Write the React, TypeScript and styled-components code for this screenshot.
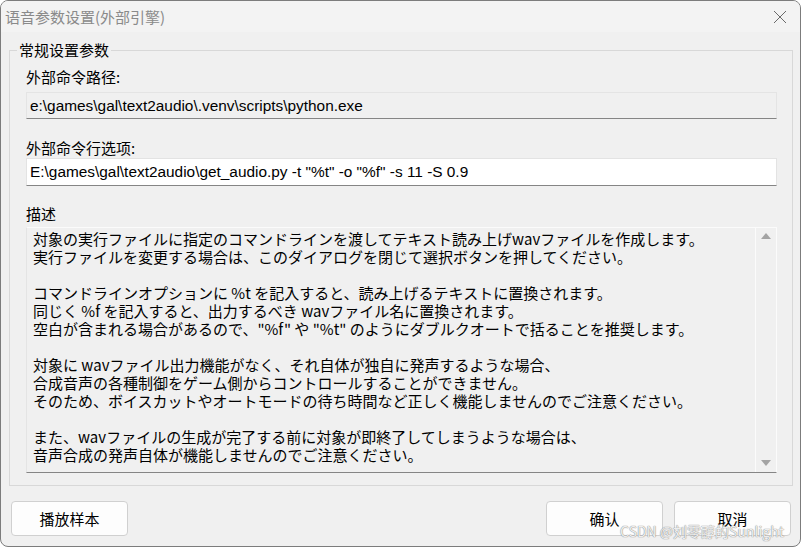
import React from 'react';
import styled, { createGlobalStyle } from 'styled-components';

const Global = createGlobalStyle`
  html, body { margin: 0; padding: 0; background: #ffffff; }
  body { font-family: "Noto Sans CJK SC", sans-serif; }
  * { box-sizing: border-box; }
`;

const Window = styled.div`
  position: relative;
  width: 801px;
  height: 547px;
  border: 1px solid #7c7c7c;
  border-radius: 8px;
  background: #f0f0f0;
  overflow: hidden;
  display: flex;
  flex-direction: column;
`;

const TitleBar = styled.div`
  height: 31px;
  flex: none;
  background: #f3f3f3;
  display: flex;
  align-items: center;
  justify-content: space-between;
  padding: 0 13px 0 4px;
`;

const Title = styled.div`
  font-family: "Noto Sans CJK SC", sans-serif;
  font-size: 15px;
  line-height: 20px;
  color: #8a8a8a;
`;

const CloseButton = styled.div`
  width: 14px;
  height: 14px;
  display: flex;
  align-items: center;
  justify-content: center;
`;

const Group = styled.fieldset`
  margin: 8px 7px 0 8px;
  padding: 0;
  border: 1px solid #d8d8d8;
  min-width: 0;
  flex: none;
`;

const Legend = styled.legend`
  margin-left: 7px;
  padding: 0 2px;
  font-size: 15px;
  line-height: 20px;
  color: #000;
`;

const GroupBody = styled.div`
  padding: 7px 15px 12px 16px;
  display: flex;
  flex-direction: column;
`;

const Label = styled.div<{ $top: number; $bottom: number }>`
  height: 20px;
  line-height: 20px;
  font-size: 15px;
  color: #000;
  margin-top: ${(p) => p.$top}px;
  margin-bottom: ${(p) => p.$bottom}px;
  font-family: "Noto Sans CJK SC", sans-serif;
`;

const Field = styled.input<{ $editable?: boolean; $h: number }>`
  display: block;
  width: 100%;
  height: ${(p) => p.$h}px;
  margin: 0;
  padding: 0 3px;
  border: 1px solid ${(p) => (p.$editable ? '#e3e3e3' : '#e4e4e4')};
  border-bottom-color: #858585;
  background: ${(p) => (p.$editable ? '#ffffff' : '#f0f0f0')};
  font-family: "Liberation Sans", Arial, sans-serif;
  font-size: 15.4px;
  color: #000;
  outline: none;
`;

const DescBox = styled.div`
  height: 246px;
  border: 1px solid #fbfbfb;
  border-bottom-color: #858585;
  border-left-color: #e4e4e4;
  background: #f0f0f0;
  display: flex;
`;

const DescText = styled.div`
  flex: 1;
  padding: 2px 6px;
  font-family: "Noto Sans CJK JP", sans-serif;
  font-size: 15px;
  line-height: 18px;
  white-space: pre;
  color: #000;
  overflow: hidden;
`;

const ScrollBar = styled.div`
  width: 21px;
  flex: none;
  border-left: 1px solid #fbfbfb;
  display: flex;
  flex-direction: column;
  justify-content: space-between;
  align-items: center;
  padding: 5px 0 6px;
`;

const ButtonRow = styled.div`
  flex: none;
  display: flex;
  align-items: center;
  padding: 15px 9px 0 10px;
  gap: 11px;
`;

const Spacer = styled.div`
  flex: 1;
`;

const Button = styled.button`
  width: 117px;
  height: 35px;
  margin: 0;
  padding: 0;
  border: 1px solid #d0d0d0;
  border-radius: 4px;
  background: #fdfdfd;
  font-family: "Noto Sans CJK SC", sans-serif;
  font-size: 15px;
  color: #000;
`;

const Watermark = styled.div`
  position: absolute;
  right: 16px;
  bottom: 6px;
  font-family: "Noto Sans CJK SC", sans-serif;
  font-size: 14px;
  line-height: 17px;
  color: rgba(252, 252, 252, 0.9);
  text-shadow: 0 0 1px #8a8a8a, 0 0 1px #8a8a8a;
  pointer-events: none;
`;

const lines = [
  '対象の実行ファイルに指定のコマンドラインを渡してテキスト読み上げwavファイルを作成します。',
  '実行ファイルを変更する場合は、このダイアログを閉じて選択ボタンを押してください。',
  '',
  'コマンドラインオプションに %t を記入すると、読み上げるテキストに置換されます。',
  '同じく %f を記入すると、出力するべき wavファイル名に置換されます。',
  '空白が含まれる場合があるので、"%f" や "%t" のようにダブルクオートで括ることを推奨します。',
  '',
  '対象に wavファイル出力機能がなく、それ自体が独自に発声するような場合、',
  '合成音声の各種制御をゲーム側からコントロールすることができません。',
  'そのため、ボイスカットやオートモードの待ち時間など正しく機能しませんのでご注意ください。',
  '',
  'また、wavファイルの生成が完了する前に対象が即終了してしまうような場合は、',
  '音声合成の発声自体が機能しませんのでご注意ください。',
];

export default function App() {
  return (
    <>
      <Global />
      <Window>
        <TitleBar>
          <Title>语音参数设置(外部引擎)</Title>
          <CloseButton>
            <svg width="14" height="14" viewBox="0 0 14 14">
              <path d="M1 1 L13 13 M13 1 L1 13" stroke="#6a6a6a" strokeWidth="1" fill="none" />
            </svg>
          </CloseButton>
        </TitleBar>
        <Group>
          <Legend>常规设置参数</Legend>
          <GroupBody>
            <Label $top={0} $bottom={5}>外部命令路径:</Label>
            <Field $h={27} readOnly value={'e:\\games\\gal\\text2audio\\.venv\\scripts\\python.exe'} />
            <Label $top={19} $bottom={0}>外部命令行选项:</Label>
            <Field
              $editable
              $h={28}
              readOnly
              value={'E:\\games\\gal\\text2audio\\get_audio.py -t "%t" -o "%f" -s 11 -S 0.9'}
            />
            <Label $top={18} $bottom={3}>描述</Label>
            <DescBox>
              <DescText>{lines.join('\n')}</DescText>
              <ScrollBar>
                <svg width="10" height="6" viewBox="0 0 10 6">
                  <path d="M5 0 L10 6 L0 6 Z" fill="#a3a3a3" />
                </svg>
                <svg width="10" height="6" viewBox="0 0 10 6">
                  <path d="M0 0 L10 0 L5 6 Z" fill="#a3a3a3" />
                </svg>
              </ScrollBar>
            </DescBox>
          </GroupBody>
        </Group>
        <ButtonRow>
          <Button>播放样本</Button>
          <Spacer />
          <Button>确认</Button>
          <Button>取消</Button>
        </ButtonRow>
        <Watermark>CSDN @刘零醇的Sunlight</Watermark>
      </Window>
    </>
  );
}
